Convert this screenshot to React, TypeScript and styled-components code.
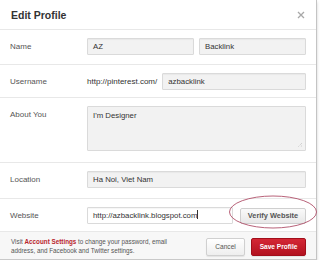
import React from "react";
import styled, { createGlobalStyle } from "styled-components";

const Global = createGlobalStyle`
  html, body { margin: 0; padding: 0; background: #ffffff; }
  body { font-family: "Liberation Sans", Arial, sans-serif; }
  * { box-sizing: border-box; }
`;

const Dialog = styled.div`
  position: relative;
  width: 317px;
  height: 260px;
  background: #ffffff;
  border-right: 1px solid #c4c4c4;
  border-bottom: 1px solid #c9c9c9;
  box-shadow: 0 2px 3px rgba(0, 0, 0, 0.18);
  display: flex;
  flex-direction: column;
`;

const Header = styled.div`
  height: 30px;
  display: flex;
  align-items: center;
  justify-content: space-between;
  padding: 0 10px 0 11px;
  border-bottom: 1px solid #e8e8e8;
`;

const Title = styled.h1`
  margin: 0;
  font-size: 10.5px;
  font-weight: bold;
  color: #333333;
`;

const Close = styled.svg`
  width: 8px;
  height: 8px;
  margin-right: 1px;
`;

const Row = styled.div<{ $h: number }>`
  height: ${(p) => p.$h}px;
  display: flex;
  align-items: flex-start;
  padding: 8px 10px 0 10px;
  border-bottom: 1px solid #e8e8e8;
`;

const Label = styled.div`
  width: 77px;
  flex: none;
  font-size: 8px;
  line-height: 17px;
  color: #555555;
`;

const Fields = styled.div`
  flex: 1;
  display: flex;
  align-items: center;
  gap: 5px;
`;

const Input = styled.div<{ $w?: number; $white?: boolean }>`
  ${(p) => (p.$w ? `width: ${p.$w}px; flex: none;` : "flex: 1;")}
  height: 17px;
  line-height: 15px;
  padding: 0 5px;
  font-size: 7.8px;
  color: #333333;
  background: ${(p) => (p.$white ? "#ffffff" : "#f2f2f2")};
  border: 1px solid #dadada;
  border-radius: 1px;
  white-space: nowrap;
  box-shadow: inset 0 1px 1px rgba(0, 0, 0, 0.04);
`;

const TextArea = styled.div`
  position: relative;
  flex: 1;
  height: 45px;
  padding: 4px 5px;
  font-size: 7.8px;
  line-height: 10px;
  color: #333333;
  background: #f2f2f2;
  border: 1px solid #dadada;
  border-radius: 1px;
`;

const Grip = styled.svg`
  position: absolute;
  right: 2px;
  bottom: 2px;
  width: 7px;
  height: 7px;
`;

const Prefix = styled.span`
  font-size: 8px;
  color: #333333;
  white-space: nowrap;
`;

const Caret = styled.span`
  display: inline-block;
  width: 1px;
  height: 9px;
  background: #333333;
  vertical-align: -1px;
`;

const VerifyButton = styled.div`
  flex: 1;
  margin-left: 2px;
  height: 16px;
  padding: 0 6px;
  display: flex;
  align-items: center;
  justify-content: center;
  font-size: 7.4px;
  font-weight: bold;
  color: #555555;
  background: linear-gradient(#fafafa, #e8e8e8);
  border: 1px solid #cfcfcf;
  border-radius: 2px;
  white-space: nowrap;
`;

const Ring = styled.svg`
  position: absolute;
  left: 228px;
  top: 195px;
  width: 90px;
  height: 35px;
  overflow: visible;
`;

const Footer = styled.div`
  flex: 1;
  display: flex;
  align-items: center;
  justify-content: space-between;
  padding: 0 10px 0 11px;
  background: #f7f7f7;
`;

const Note = styled.p`
  margin: 0;
  width: 175px;
  font-size: 6.3px;
  line-height: 9px;
  color: #555555;
`;

const Link = styled.span`
  color: #b8242c;
  font-weight: bold;
`;

const Actions = styled.div`
  display: flex;
  gap: 6px;
  margin-top: 2px;
`;

const Btn = styled.div<{ $primary?: boolean }>`
  height: 18px;
  display: flex;
  align-items: center;
  justify-content: center;
  font-size: 6.6px;
  font-weight: ${(p) => (p.$primary ? "bold" : "normal")};
  color: ${(p) => (p.$primary ? "#ffffff" : "#555555")};
  width: ${(p) => (p.$primary ? 55 : 39)}px;
  background: ${(p) =>
    p.$primary ? "linear-gradient(#d42735, #b3121f)" : "linear-gradient(#ffffff, #eeeeee)"};
  border: 1px solid ${(p) => (p.$primary ? "#a10f1b" : "#d0d0d0")};
  border-radius: 2px;
  box-shadow: 0 1px 1px rgba(0, 0, 0, 0.08);
`;

export default function App() {
  return (
    <>
      <Global />
      <Dialog>
        <Header>
          <Title>Edit Profile</Title>
          <Close viewBox="0 0 8 8">
            <path d="M1 1 L7 7 M7 1 L1 7" stroke="#a8a8a8" strokeWidth="1.3" />
          </Close>
        </Header>
        <Row $h={35}>
          <Label>Name</Label>
          <Fields>
            <Input>AZ</Input>
            <Input>Backlink</Input>
          </Fields>
        </Row>
        <Row $h={33}>
          <Label>Username</Label>
          <Fields>
            <Prefix>http://pinterest.com/</Prefix>
            <Input>azbacklink</Input>
          </Fields>
        </Row>
        <Row $h={65}>
          <Label>About You</Label>
          <Fields>
            <TextArea>
              I'm Designer
              <Grip viewBox="0 0 7 7">
                <path d="M6 2 L2 6 M6 4.5 L4.5 6" stroke="#b5b5b5" strokeWidth="0.8" strokeDasharray="1 1" />
              </Grip>
            </TextArea>
          </Fields>
        </Row>
        <Row $h={36}>
          <Label>Location</Label>
          <Fields>
            <Input>Ha Noi, Viet Nam</Input>
          </Fields>
        </Row>
        <Row $h={33}>
          <Label>Website</Label>
          <Fields>
            <Input $w={146} $white>
              http://azbacklink.blogspot.com
              <Caret />
            </Input>
            <VerifyButton>Verify Website</VerifyButton>
          </Fields>
        </Row>
        <Footer>
          <Note>
            Visit <Link>Account Settings</Link> to change your password, email
            <br />
            address, and Facebook and Twitter settings.
          </Note>
          <Actions>
            <Btn>Cancel</Btn>
            <Btn $primary>Save Profile</Btn>
          </Actions>
        </Footer>
        <Ring viewBox="0 0 90 35">
          <ellipse cx="45" cy="17" rx="43.5" ry="16" fill="none" stroke="#b0506a" strokeWidth="0.9" />
        </Ring>
      </Dialog>
    </>
  );
}
